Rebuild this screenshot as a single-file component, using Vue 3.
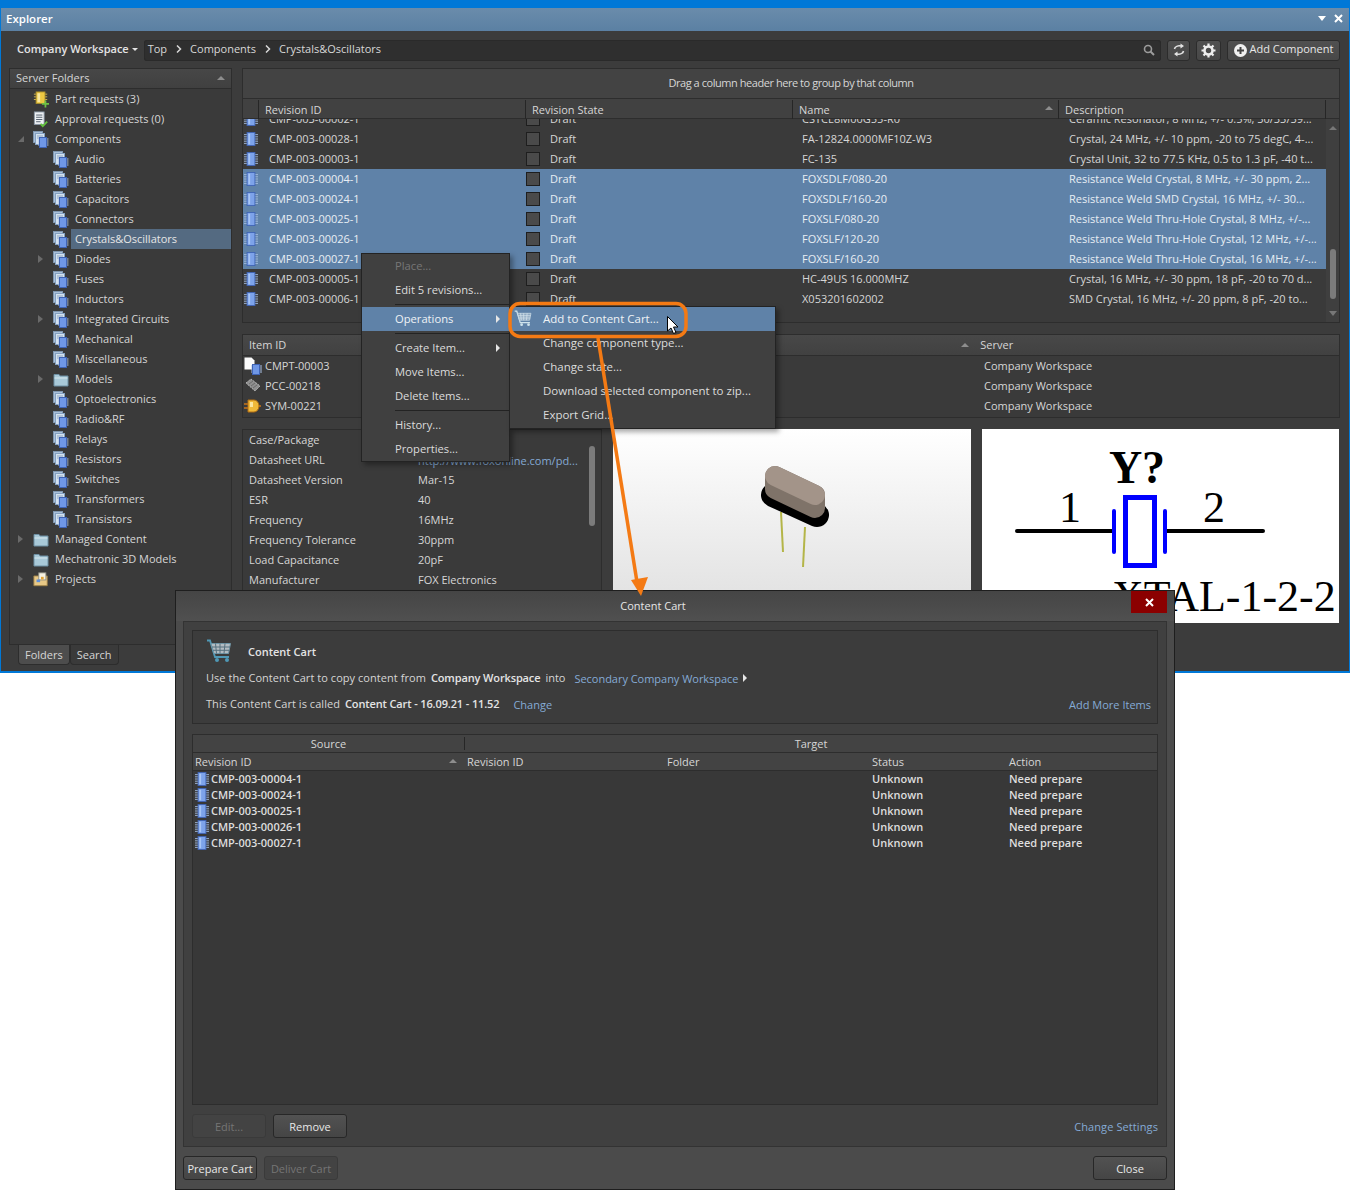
<script setup>
// folder tree on the left of the explorer
const tree = [
  { name: "Part requests (3)", icon: "partreq", level: 0 },
  { name: "Approval requests (0)", icon: "approval", level: 0 },
  { name: "Components", icon: "stack", level: 0, open: true },
  { name: "Audio", icon: "stack", level: 1 },
  { name: "Batteries", icon: "stack", level: 1 },
  { name: "Capacitors", icon: "stack", level: 1 },
  { name: "Connectors", icon: "stack", level: 1 },
  { name: "Crystals&Oscillators", icon: "stack", level: 1, selected: true },
  { name: "Diodes", icon: "stack", level: 1, closed: true },
  { name: "Fuses", icon: "stack", level: 1 },
  { name: "Inductors", icon: "stack", level: 1 },
  { name: "Integrated Circuits", icon: "stack", level: 1, closed: true },
  { name: "Mechanical", icon: "stack", level: 1 },
  { name: "Miscellaneous", icon: "stack", level: 1 },
  { name: "Models", icon: "folder", level: 1, closed: true },
  { name: "Optoelectronics", icon: "stack", level: 1 },
  { name: "Radio&RF", icon: "stack", level: 1 },
  { name: "Relays", icon: "stack", level: 1 },
  { name: "Resistors", icon: "stack", level: 1 },
  { name: "Switches", icon: "stack", level: 1 },
  { name: "Transformers", icon: "stack", level: 1 },
  { name: "Transistors", icon: "stack", level: 1 },
  { name: "Managed Content", icon: "folder", level: 0, closed: true },
  { name: "Mechatronic 3D Models", icon: "folder", level: 0 },
  { name: "Projects", icon: "projects", level: 0, closed: true },
];

// component grid rows
const revisions = [
  { id: "CMP-003-00002-1", name: "CSTCE8M00G55-R0", desc: "Ceramic Resonator, 8 MHz, +/- 0.5%, 30/33/39..." },
  { id: "CMP-003-00028-1", name: "FA-12824.0000MF10Z-W3", desc: "Crystal, 24 MHz, +/- 10 ppm, -20 to 75 degC, 4-..." },
  { id: "CMP-003-00003-1", name: "FC-135", desc: "Crystal Unit, 32 to 77.5 KHz, 0.5 to 1.3 pF, -40 t..." },
  { id: "CMP-003-00004-1", name: "FOXSDLF/080-20", desc: "Resistance Weld Crystal, 8 MHz, +/- 30 ppm, 2...", selected: true },
  { id: "CMP-003-00024-1", name: "FOXSDLF/160-20", desc: "Resistance Weld SMD Crystal, 16 MHz, +/- 30...", selected: true },
  { id: "CMP-003-00025-1", name: "FOXSLF/080-20", desc: "Resistance Weld Thru-Hole Crystal, 8 MHz, +/-...", selected: true },
  { id: "CMP-003-00026-1", name: "FOXSLF/120-20", desc: "Resistance Weld Thru-Hole Crystal, 12 MHz, +/-...", selected: true },
  { id: "CMP-003-00027-1", name: "FOXSLF/160-20", desc: "Resistance Weld Thru-Hole Crystal, 16 MHz, +/-...", selected: true },
  { id: "CMP-003-00005-1", name: "HC-49US 16.000MHZ", desc: "Crystal, 16 MHz, +/- 30 ppm, 18 pF, -20 to 70 d..." },
  { id: "CMP-003-00006-1", name: "X053201602002", desc: "SMD Crystal, 16 MHz, +/- 20 ppm, 8 pF, -20 to..." },
];

const items = [
  { id: "CMPT-00003", icon: "doc" },
  { id: "PCC-00218", icon: "pcb" },
  { id: "SYM-00221", icon: "sym" },
];

const params = [
  ["Case/Package", "HC-49US"],
  ["Datasheet URL", "http://www.foxonline.com/pd..."],
  ["Datasheet Version", "Mar-15"],
  ["ESR", "40"],
  ["Frequency", "16MHz"],
  ["Frequency Tolerance", "30ppm"],
  ["Load Capacitance", "20pF"],
  ["Manufacturer", "FOX Electronics"],
];

const cartRows = ["CMP-003-00004-1", "CMP-003-00024-1", "CMP-003-00025-1", "CMP-003-00026-1", "CMP-003-00027-1"];
</script>

<template>
  <div class="page">
    <!-- shared icon symbols -->
    <svg class="defs" width="0" height="0">
      <defs>
        <symbol id="chip" viewBox="0 0 16 16">
          <path d="M0 3h4M0 5.500h4M0 8h4M0 10.500h4M0 13h4M12 3h4M12 5.500h4M12 8h4M12 10.500h4M12 13h4" stroke="#a9c0e4" stroke-width="1" />
          <rect x="3.500" y="0.500" width="9" height="15" fill="#7da3ea" stroke="#3f63b4" />
          <rect x="5" y="2" width="2" height="12" fill="#a9c6f5" />
        </symbol>
        <symbol id="stack" viewBox="0 0 16 17">
          <rect x="0.500" y="0.500" width="9" height="11" fill="#a9bfd8" stroke="#7f95ad" />
          <rect x="2.500" y="2.500" width="9" height="11" fill="#d5e1ee" stroke="#84a0bf" />
          <path d="M4 5h6M4 7h6" stroke="#8fa6bd" />
          <path d="M5 8h2M5 10h2M5 12h2M5 14h2M13 8h2.500M13 10h2.500M13 12h2.500M13 14h2.500" stroke="#a9c0e4" />
          <rect x="6.500" y="6.500" width="7" height="10" fill="#6f97e6" stroke="#3f63b4" />
        </symbol>
        <symbol id="folder" viewBox="0 0 16 16">
          <path d="M1 3h5l1 1.500h8v10H1z" fill="#a9c9d8" stroke="#6d8fa3" />
          <path d="M1.500 6.500h13" stroke="#d7e8ef" />
        </symbol>
        <symbol id="partreq" viewBox="0 0 18 18">
          <path d="M1 3h3M1 6h3M1 9h3M13 3h3M13 6h3M13 9h3" stroke="#d9bd58" />
          <rect x="3.500" y="0.500" width="10" height="13" fill="#edc842" stroke="#a98f2b" />
          <rect x="5" y="2" width="3" height="10" fill="#f8e7a0" />
          <path d="M13 10h2v3h3v2h-3v3h-2v-3h-3v-2h3z" fill="#6fc144" />
        </symbol>
        <symbol id="approval" viewBox="0 0 18 18">
          <rect x="1.500" y="0.500" width="11" height="14" fill="#eef1f4" stroke="#8a97a5" />
          <path d="M3.500 4h7M3.500 6.500h7M3.500 9h7M3.500 11.500h5" stroke="#475462" />
          <path d="M8.500 14l2.500 2.500 5-5" fill="none" stroke="#63c23c" stroke-width="2" />
        </symbol>
        <symbol id="projects" viewBox="0 0 18 18">
          <path d="M1 5h6v-1h4v1h5v11H1z" fill="#e7c886" stroke="#9d7f45" />
          <rect x="6.500" y="1.500" width="8" height="8" fill="#f6f2e2" stroke="#8c8c80" />
          <path d="M4 9h4v3H4z" fill="#5f8fd8" />
          <path d="M9 6h3v3H9z" fill="#e4a535" />
        </symbol>
        <symbol id="doc" viewBox="0 0 18 18">
          <path d="M0.500 0.500h7l3 3v9h-10z" fill="#fbfbfb" />
          <path d="M7 9h1M7 11h1M7 13h1M7 15h1M16 9h2M16 11h2M16 13h2M16 15h2" stroke="#a9c0e4" />
          <rect x="8.500" y="7.500" width="7" height="10" fill="#6f97e6" stroke="#3f63b4" />
        </symbol>
        <symbol id="pcb" viewBox="0 0 18 18">
          <path d="M2 6l5-4 9 7-5 5z" fill="#8f8f8f" stroke="#b5b5b5" stroke-dasharray="2 1" />
          <path d="M5 7l4-3M7 9l4-3M9 11l4-3" stroke="#6a6a6a" />
        </symbol>
        <symbol id="sym" viewBox="0 0 18 18">
          <path d="M0 7h5M0 11h5M13 9h4" stroke="#c8741a" stroke-width="1.500" />
          <path d="M4 3h6a5 6 0 0 1 0 12H4z" fill="#f0b93a" stroke="#b06d12" />
          <path d="M6 5h3v5H6z" fill="#fbe6a2" />
        </symbol>
        <symbol id="cart" viewBox="0 0 26 24">
          <path d="M1 1.500h3l5 16.500h14" fill="none" stroke="#4f98b5" stroke-width="1.800" />
          <path d="M5 4.500h19.500l-2 10H8z" fill="#b3bcc2" stroke="#6f95a6" />
          <path d="M9.500 4.500l1 10M14 4.500v10M19 4.500l-1 10M6 8h18M7 11.300h16.500" stroke="#56707e" />
          <circle cx="11" cy="21" r="2" fill="#4f98b5" />
          <circle cx="21" cy="21" r="2" fill="#4f98b5" />
        </symbol>
        <!-- paler cart for the highlighted menu row -->
        <symbol id="cart-hot" viewBox="0 0 26 24">
          <path d="M1 1.500h3l5 16.500h14" fill="none" stroke="#cfe3ec" stroke-width="1.800" />
          <path d="M5 4.500h19.500l-2 10H8z" fill="#8fa9c2" stroke="#cfdfe8" />
          <path d="M9.500 4.500l1 10M14 4.500v10M19 4.500l-1 10M6 8h18M7 11.300h16.500" stroke="#dbe6ee" />
          <circle cx="11" cy="21" r="2" fill="#cfe3ec" />
          <circle cx="21" cy="21" r="2" fill="#cfe3ec" />
        </symbol>
      </defs>
    </svg>

    <div class="window">
      <div class="titlebar">
        <span class="title-text">Explorer</span>
        <div class="title-btns">
          <span class="tri-down"></span>
          <svg width="9" height="9" viewBox="0 0 9 9"><path d="M1 1l7 7M8 1l-7 7" stroke="#fff" stroke-width="2" /></svg>
        </div>
      </div>

      <!-- workspace picker, breadcrumb, actions -->
      <div class="toolbar">
        <span class="workspace">Company Workspace</span>
        <span class="caret"></span>
        <div class="searchbar">
          <span>Top</span>
          <svg class="crumb" width="6" height="8" viewBox="0 0 6 8"><path d="M1 0.500L4.500 4 1 7.500" fill="none" stroke="#d8d8d8" stroke-width="1.500" /></svg>
          <span>Components</span>
          <svg class="crumb" width="6" height="8" viewBox="0 0 6 8"><path d="M1 0.500L4.500 4 1 7.500" fill="none" stroke="#d8d8d8" stroke-width="1.500" /></svg>
          <span>Crystals&amp;Oscillators</span>
          <svg class="search-icon" width="12" height="12" viewBox="0 0 12 12">
            <circle cx="5" cy="5" r="3.500" fill="none" stroke="#9c9c9c" stroke-width="1.600" />
            <path d="M7.500 7.500L11 11" stroke="#9c9c9c" stroke-width="2" />
          </svg>
        </div>
        <button class="tool-btn refresh">
          <svg width="14" height="14" viewBox="0 0 14 14">
            <path d="M2.500 6C3 3.500 6 2.500 9 3M11.500 8C11 10.500 8 11.500 5 11" fill="none" stroke="#e4e4e4" stroke-width="1.600" />
            <path d="M8.500 0.500l3.500 2.500-3.500 2.500zM5.500 13.500L2 11l3.500-2.500z" fill="#e4e4e4" />
          </svg>
        </button>
        <button class="tool-btn gear">
          <svg width="15" height="15" viewBox="0 0 15 15">
            <circle cx="7.500" cy="7.500" r="4" fill="none" stroke="#eee" stroke-width="2.600" />
            <path d="M7.500 0.500v3M7.500 11.500v3M0.500 7.500h3M11.500 7.500h3M2.500 2.500l2 2M10.500 10.500l2 2M12.500 2.500l-2 2M4.500 10.500l-2 2" stroke="#eee" stroke-width="2.200" />
          </svg>
        </button>
        <button class="tool-btn add">
          <svg width="13" height="13" viewBox="0 0 13 13">
            <circle cx="6.500" cy="6.500" r="6.500" fill="#f0f0f0" />
            <path d="M6.500 3v7M3 6.500h7" stroke="#444" stroke-width="2" />
          </svg>
          <span class="add-label">Add Component</span>
        </button>
      </div>

      <div class="main">
        <!-- server folders panel -->
        <div class="left">
          <div class="panel folders">
            <div class="col-head folders-head">
              <span>Server Folders</span>
              <span class="tri-up"></span>
            </div>
            <div v-for="node in tree" :key="node.name" class="tree-row" :class="'lvl' + node.level">
              <span class="expander">
                <span v-if="node.open" class="tri-open"></span>
                <span v-else-if="node.closed" class="tri-closed"></span>
              </span>
              <svg class="tree-icon" width="16" height="17"><use :href="'#' + node.icon" /></svg>
              <span class="tree-label" :class="{ 'tree-selected': node.selected }">{{ node.name }}</span>
            </div>
          </div>
          <div class="tabs">
            <span class="tab active">Folders</span>
            <span class="tab">Search</span>
          </div>
        </div>

        <div class="right">
          <!-- revisions grid -->
          <div class="panel grid-panel">
            <div class="group-bar">Drag a column header here to group by that column</div>
            <div class="grid-head">
              <span class="col-title first">Revision ID</span>
              <span class="col-title">Revision State</span>
              <span class="col-title">Name<span class="tri-up sort"></span></span>
              <span class="col-title last">Description</span>
            </div>
            <div class="grid-body">
              <div class="grid-rows">
                <div v-for="row in revisions" :key="row.id" class="grid-row" :class="{ selected: row.selected }">
                  <span class="cell id-cell">
                    <svg width="14" height="14"><use href="#chip" /></svg>
                    {{ row.id }}
                  </span>
                  <span class="cell state-cell"><span class="state-box"></span>Draft</span>
                  <span class="cell name-cell">{{ row.name }}</span>
                  <span class="cell desc-cell">{{ row.desc }}</span>
                </div>
              </div>
              <div class="scrollbar">
                <span class="tri-up"></span>
                <span class="thumb"></span>
                <span class="tri-down dim"></span>
              </div>
            </div>
          </div>

          <!-- items of the selected revision -->
          <div class="panel items-panel">
            <div class="items-head">
              <span>Item ID</span>
              <span class="items-server"><span class="tri-up sort2"></span>Server</span>
            </div>
            <div v-for="item in items" :key="item.id" class="item-row">
              <span class="item-id">
                <svg width="18" height="18"><use :href="'#' + item.icon" /></svg>
                {{ item.id }}
              </span>
              <span class="item-server">Company Workspace</span>
            </div>
          </div>

          <div class="lower">
            <!-- parameters list -->
            <div class="panel params">
              <div v-for="p in params" :key="p[0]" class="param-row">
                <span class="param-name">{{ p[0] }}</span>
                <span class="param-value" :class="{ link: p[0] === 'Datasheet URL' }">{{ p[1] }}</span>
              </div>
              <span class="params-thumb"></span>
            </div>

            <!-- 3d preview of the part -->
            <div class="preview">
              <svg width="358" height="194" viewBox="0 0 358 194">
                <path d="M168 83L170 123" stroke="#b4b548" stroke-width="2" />
                <path d="M192 98L190 138" stroke="#b4b548" stroke-width="2" />
                <path d="M160 66L204 86" stroke="#000" stroke-width="24" stroke-linecap="round" />
                <path d="M162 47L202 66V79L162 60z" fill="#7f7369" stroke="#7f7369" stroke-width="20" stroke-linejoin="round" />
                <path d="M162 47L202 66" stroke="#a39489" stroke-width="20" stroke-linecap="round" />
              </svg>
            </div>

            <!-- schematic symbol -->
            <div class="symbol">
              <svg width="357" height="194" viewBox="0 0 357 194">
                <text class="sym-ref" x="155" y="54" text-anchor="middle">Y?</text>
                <text class="sym-pin" x="88" y="93" text-anchor="middle">1</text>
                <text class="sym-pin" x="232" y="93" text-anchor="middle">2</text>
                <path d="M35 102H132M185 102H281" stroke="#000" stroke-width="4" stroke-linecap="round" />
                <path d="M132 82V123M183 82V123" stroke="#0000ff" stroke-width="4" stroke-linecap="round" />
                <rect x="143.500" y="68.500" width="29" height="68" fill="none" stroke="#0000ff" stroke-width="5" />
                <text class="sym-pin" x="130" y="182">XTAL-1-2-2</text>
              </svg>
            </div>
          </div>
        </div>
      </div>
    </div>

    <!-- right click menu -->
    <div class="menu context">
      <div class="menu-item disabled">Place...</div>
      <div class="menu-item">Edit 5 revisions...</div>
      <div class="menu-sep"></div>
      <div class="menu-item hot">Operations<span class="tri-right"></span></div>
      <div class="menu-sep"></div>
      <div class="menu-item">Create Item...<span class="tri-right"></span></div>
      <div class="menu-item">Move Items...</div>
      <div class="menu-item">Delete Items...</div>
      <div class="menu-sep"></div>
      <div class="menu-item">History...</div>
      <div class="menu-item">Properties...</div>
    </div>

    <div class="menu submenu">
      <div class="menu-item hot">
        <svg class="menu-icon" width="18" height="17"><use href="#cart-hot" /></svg>
        Add to Content Cart...
      </div>
      <div class="menu-item">Change component type...</div>
      <div class="menu-item">Change state...</div>
      <div class="menu-item">Download selected component to zip...</div>
      <div class="menu-item">Export Grid...</div>
    </div>

    <!-- content cart dialog -->
    <div class="dialog">
      <div class="dialog-title">
        Content Cart
        <span class="dialog-close">
          <svg width="9" height="9" viewBox="0 0 9 9"><path d="M1 1l7 7M8 1l-7 7" stroke="#fff" stroke-width="2" /></svg>
        </span>
      </div>
      <div class="dialog-frame">
        <div class="info-box">
          <div class="info-head">
            <svg width="26" height="24"><use href="#cart" /></svg>
            <b>Content Cart</b>
          </div>
          <div class="info-line first-line">
            <span class="wide">Use the Content Cart to copy content from</span>
            <b class="gap tight">Company Workspace</b>
            <span class="gap">into</span>
            <a class="link target">Secondary Company Workspace</a>
            <span class="tri-right small"></span>
          </div>
          <div class="info-line second-line">
            <span class="wide">This Content Cart is called</span>
            <b class="gap tight">Content Cart - 16.09.21 - 11.52</b>
            <a class="link change">Change</a>
            <a class="link more">Add More Items</a>
          </div>
        </div>

        <div class="cart-table">
          <div class="cart-group">
            <span class="group-source">Source</span>
            <span class="group-target">Target</span>
          </div>
          <div class="cart-head">
            <span>Revision ID<span class="tri-up sort3"></span></span>
            <span>Revision ID</span>
            <span>Folder</span>
            <span>Status</span>
            <span>Action</span>
          </div>
          <div class="cart-body">
            <div v-for="id in cartRows" :key="id" class="cart-row">
              <span class="cart-id">
                <svg width="14" height="14"><use href="#chip" /></svg>
                {{ id }}
              </span>
              <span></span>
              <span></span>
              <span>Unknown</span>
              <span>Need prepare</span>
            </div>
          </div>
        </div>

        <div class="frame-actions">
          <button class="btn off">Edit...</button>
          <button class="btn">Remove</button>
          <a class="link settings">Change Settings</a>
        </div>
      </div>
      <div class="dialog-actions">
        <button class="btn">Prepare Cart</button>
        <button class="btn off">Deliver Cart</button>
        <button class="btn close-btn">Close</button>
      </div>
    </div>

    <!-- orange callout, goes over everything -->
    <svg class="callout" width="1350" height="1190" viewBox="0 0 1350 1190">
      <path d="M598 338L637 582" stroke="#f47a14" stroke-width="3.500" fill="none" />
      <path d="M631 580L648 577L641 596z" fill="#f47a14" />
      <rect x="510" y="303.500" width="176" height="33" rx="10" fill="none" stroke="#f47a14" stroke-width="3.500" />
      <path d="M667.500 316.500V331L671 328L673.500 333.500L676 332.500L673.500 327L678 327z" fill="#fff" stroke="#000" stroke-width="1" />
    </svg>
  </div>
</template>

<style>
body {
  margin: 0;
  background: #fff;
}
</style>

<style scoped>
.page {
  position: relative;
  width: 1350px;
  height: 1190px;
  overflow: hidden;
  font-family: "Open Sans", "Noto Sans", sans-serif;
  font-size: 11px;
  color: #d6d6d6;
  background: #fff;
}

.defs {
  position: absolute;
}

button {
  font-family: inherit;
  font-size: 11px;
  color: #e8e8e8;
  padding: 0;
}

/* small triangles used all over */
.tri-up,
.tri-down,
.tri-right,
.tri-closed,
.tri-open {
  display: inline-block;
  width: 0;
  height: 0;
}
.tri-up {
  border-left: 4px solid transparent;
  border-right: 4px solid transparent;
  border-bottom: 4px solid #8d8d8d;
}
.tri-down {
  border-left: 4px solid transparent;
  border-right: 4px solid transparent;
  border-top: 5px solid #fff;
}
.tri-down.dim {
  border-top-color: #777;
}
.tri-right {
  position: absolute;
  right: 9px;
  top: 8px;
  border-top: 4px solid transparent;
  border-bottom: 4px solid transparent;
  border-left: 4px solid #e6e6e6;
}
.tri-closed {
  border-top: 4px solid transparent;
  border-bottom: 4px solid transparent;
  border-left: 5px solid #6a6a6a;
}
.tri-open {
  border-left: 6px solid transparent;
  border-bottom: 6px solid #6a6a6a;
}

/* main window */
.window {
  box-sizing: border-box;
  height: 673px;
  background: #3c3c3c;
  border: 1px solid #0078d7;
  border-top: 8px solid #0078d7;
  border-bottom-width: 2px;
}

.titlebar {
  box-sizing: border-box;
  display: flex;
  align-items: center;
  justify-content: space-between;
  height: 23px;
  padding: 0 6px 2px 5px;
  background: linear-gradient(#6a8cab, #5b80a3);
}
.title-text {
  font-size: 11.500px;
  font-weight: 600;
  color: #fff;
}
.title-btns {
  display: flex;
  align-items: center;
  gap: 8px;
}

.toolbar {
  display: flex;
  align-items: center;
  height: 32px;
  padding: 3px 9px 0 16px;
}
.workspace {
  padding-bottom: 4px;
  font-weight: 600;
  color: #e4e4e4;
}
.caret {
  margin: 0 6px 2px 3px;
  border-left: 3px solid transparent;
  border-right: 3px solid transparent;
  border-top: 3px solid #e4e4e4;
}
.searchbar {
  flex: 1;
  display: flex;
  align-items: center;
  box-sizing: border-box;
  height: 21px;
  padding: 0 6px 3px 4px;
  background: #2f2f2f;
  border-radius: 3px;
  box-shadow: inset 0 0 0 1px #2a2a2a;
  color: #d8d8d8;
}
.crumb {
  margin: 0 8.500px;
}
.search-icon {
  margin: 3px 0 0 auto;
}
.tool-btn {
  display: flex;
  align-items: center;
  justify-content: center;
  height: 21px;
  margin-left: 6px;
  background: linear-gradient(#505050, #484848);
  border: 1px solid #2c2c2c;
  border-radius: 3px;
}
.refresh {
  width: 23px;
}
.gear {
  width: 25px;
}
.add {
  gap: 3px;
  width: 113px;
}
.add-label {
  padding-bottom: 3px;
}

.main {
  display: flex;
  gap: 10px;
  margin: 2px 9px 0 8px;
}
.panel {
  box-sizing: border-box;
  background: #3a3a3a;
  border: 1px solid #2d2d2d;
}

/* left folders panel */
.left {
  width: 223px;
  flex-shrink: 0;
}
.folders {
  height: 577px;
}
.col-head {
  background: linear-gradient(#474747, #404040);
  border-bottom: 1px solid #2d2d2d;
}
.folders-head {
  display: flex;
  align-items: center;
  justify-content: space-between;
  box-sizing: border-box;
  height: 20px;
  padding: 0 6px 2px;
}
.tree-row {
  display: flex;
  align-items: center;
  height: 20px;
}
.expander {
  display: flex;
  align-items: center;
  justify-content: center;
  width: 7px;
  margin-right: 9px;
}
.lvl0 .expander {
  margin-left: 7px;
}
.lvl1 .expander {
  margin-left: 27px;
}
.tree-icon {
  flex-shrink: 0;
  margin-right: 2px;
}
.tree-label {
  flex: 1;
  height: 20px;
  line-height: 20px;
  padding-left: 4px;
}
.tree-selected {
  background: #546a81;
  color: #e6e6e6;
}
.tabs {
  display: flex;
  margin-left: 9px;
}
.tab {
  display: block;
  box-sizing: border-box;
  height: 20px;
  line-height: 19px;
  padding: 0 6px;
  background: #3a3a3a;
  border: 1px solid #2d2d2d;
  border-top: none;
  border-radius: 0 0 4px 4px;
}
.tab.active {
  background: #4d4d4d;
}

/* right column */
.right {
  flex: 1;
  display: flex;
  flex-direction: column;
  gap: 11px;
}
.grid-panel {
  height: 255px;
  overflow: hidden;
}
.group-bar {
  height: 29px;
  line-height: 28px;
  text-align: center;
  letter-spacing: -0.450px;
  background: #434343;
  border-bottom: 1px solid #2d2d2d;
}
.grid-head {
  display: grid;
  grid-template-columns: 282px 267px 266px 268px;
  height: 19px;
  background: #414141;
  border-bottom: 1px solid #2d2d2d;
}
.col-title {
  position: relative;
  padding-left: 6px;
  border-left: 1px solid #262626;
  margin: 1px 0;
  line-height: 19px;
}
.col-title.first {
  margin-left: 15px;
  padding-left: 6px;
}
.col-title.last {
  border-right: 1px solid #262626;
}
.sort {
  position: absolute;
  right: 5px;
  top: 6px;
}
.grid-body {
  display: flex;
  height: 206px;
  overflow: hidden;
}
.grid-rows {
  width: 1083px;
  margin-top: -10px;
}
.grid-row {
  display: grid;
  grid-template-columns: 282px 267px 266px 268px;
  height: 20px;
  line-height: 20px;
}
.grid-row.selected {
  background: #5f82a8;
  color: #e8eef4;
}
.cell {
  overflow: hidden;
  white-space: nowrap;
}
.id-cell {
  display: flex;
  align-items: center;
  gap: 11px;
  padding-left: 1px;
}
.state-cell {
  display: flex;
  align-items: center;
  padding-left: 1px;
}
.state-box {
  box-sizing: border-box;
  width: 14px;
  height: 14px;
  margin: 0 10px 0 0;
  background: #4a4a4a;
  border: 1px solid #1e1e1e;
}
.name-cell {
  padding-left: 10px;
}
.desc-cell {
  padding-left: 11px;
}
.scrollbar {
  position: relative;
  flex: 1;
  background: #3f3f3f;
}
.scrollbar .tri-up {
  position: absolute;
  left: 3px;
  top: 7px;
  border-bottom-color: #777;
}
.scrollbar .thumb {
  position: absolute;
  left: 4px;
  top: 130px;
  width: 6px;
  height: 50px;
  background: #7b7b7b;
  border-radius: 3px;
}
.scrollbar .tri-down {
  position: absolute;
  left: 3px;
  top: 192px;
}

/* item list */
.items-panel {
  height: 84px;
}
.items-head {
  display: flex;
  height: 20px;
  line-height: 20px;
  padding-left: 6px;
  background: linear-gradient(#484848, #414141);
  border-bottom: 1px solid #2d2d2d;
}
.items-server {
  position: relative;
  margin-left: 694px;
}
.sort2 {
  position: absolute;
  left: -19px;
  top: 8px;
}
.item-row {
  display: flex;
  height: 20px;
  line-height: 20px;
}
.item-id {
  display: flex;
  align-items: center;
  gap: 3px;
  width: 740px;
  padding-left: 1px;
}

/* bottom row */
.lower {
  display: flex;
  height: 194px;
  gap: 11px;
}
.params {
  position: relative;
  width: 360px;
}
.param-row {
  display: flex;
  height: 20px;
  line-height: 20px;
  padding-left: 6px;
}
.param-name {
  width: 169px;
}
.param-value.link {
  color: #84a9d4;
}
.params-thumb {
  position: absolute;
  right: 6px;
  top: 16px;
  width: 6px;
  height: 80px;
  background: #7b7b7b;
  border-radius: 3px;
}
.preview {
  width: 358px;
  height: 194px;
  background: linear-gradient(#fff, #dedede);
}
.symbol {
  width: 357px;
  height: 194px;
  background: #fff;
}
.sym-ref {
  font: bold 46px "Liberation Serif", serif;
}
.sym-pin {
  font: 44px "Liberation Serif", serif;
}

/* context menus */
.menu {
  position: absolute;
  box-sizing: border-box;
  background: #404040;
  border: 1px solid #232323;
  box-shadow: 3px 3px 5px rgba(0, 0, 0, 0.35);
}
.menu-item {
  position: relative;
  height: 24px;
  line-height: 24px;
  padding-left: 33px;
  color: #dcdcdc;
}
.menu-item.disabled {
  color: #777;
}
.menu-item.hot {
  background: #5f82a8;
  color: #eef2f6;
}
.menu-sep {
  height: 1px;
  margin: 2px 0 2px 33px;
  background: #232323;
}
.context {
  left: 361px;
  top: 253px;
  width: 149px;
  height: 209px;
  font-size: 11.200px;
}
.submenu {
  left: 509px;
  top: 306px;
  width: 267px;
  height: 123px;
  font-size: 11.500px;
}
.menu-icon {
  position: absolute;
  left: 4px;
  top: 3px;
}

/* content cart dialog */
.dialog {
  position: absolute;
  left: 175px;
  top: 590px;
  box-sizing: border-box;
  width: 1000px;
  height: 600px;
  background: #4b4b4b;
  border: 1px solid #1e1e1e;
}
.dialog-title {
  position: relative;
  height: 30px;
  line-height: 30px;
  padding-right: 44px;
  text-align: center;
  color: #e6e6e6;
  background: linear-gradient(#454545, #505050);
}
.dialog-close {
  position: absolute;
  right: 7px;
  top: 0;
  display: flex;
  align-items: center;
  justify-content: center;
  width: 36px;
  height: 22px;
  background: #8b0000;
}
.dialog-frame {
  box-sizing: border-box;
  height: 526px;
  margin: 0 7px;
  padding: 8px;
  background: #404040;
  border: 1px solid #333;
}
.info-box {
  position: relative;
  box-sizing: border-box;
  height: 94px;
  padding: 7px 13px;
  background: #3c3c3c;
  border: 1px solid #2d2d2d;
}
.info-head {
  display: flex;
  align-items: center;
  gap: 16px;
  height: 26px;
  color: #e6e6e6;
}
b {
  font-weight: 600;
  color: #e4e4e4;
}
.info-line {
  position: relative;
  display: flex;
  height: 26px;
  line-height: 26px;
  white-space: nowrap;
}
.info-line.first-line {
  margin-top: 1px;
}
.wide {
  letter-spacing: 0.050px;
}
.gap {
  margin-left: 5px;
}
.tight {
  letter-spacing: -0.130px;
}
.link {
  color: #85abd6;
  padding-top: 1px;
}
.target {
  margin-left: 9px;
  letter-spacing: -0.030px;
}
.tri-right.small {
  position: static;
  margin: 9px 0 0 5px;
}
.change {
  margin-left: 14px;
}
.more {
  position: absolute;
  right: -7px;
}
.cart-table {
  box-sizing: border-box;
  height: 371px;
  margin-top: 10px;
  background: #383838;
  border: 1px solid #2d2d2d;
}
.cart-group {
  display: flex;
  height: 17px;
  background: #434343;
  border-bottom: 1px solid #2d2d2d;
}
.group-source {
  width: 271px;
  text-align: center;
  border-right: 1px solid #262626;
  margin: 2px 0;
  line-height: 14px;
}
.group-target {
  flex: 1;
  text-align: center;
  margin: 2px 0;
  line-height: 14px;
}
.cart-head,
.cart-row {
  display: grid;
  grid-template-columns: 272px 200px 205px 137px 1fr;
}
.cart-head {
  height: 17px;
  line-height: 17px;
  background: #434343;
  border-bottom: 1px solid #2d2d2d;
  padding-left: 2px;
}
.cart-head > span {
  position: relative;
}
.sort3 {
  position: absolute;
  right: 10px;
  top: 6px;
}
.cart-row {
  height: 16px;
  line-height: 16px;
  padding-left: 2px;
  font-weight: 600;
  color: #dedede;
}
.cart-id {
  display: flex;
  align-items: center;
  gap: 2px;
}

.frame-actions {
  display: flex;
  align-items: center;
  gap: 7px;
  height: 24px;
  margin-top: 9px;
}
.btn {
  box-sizing: border-box;
  width: 74px;
  height: 24px;
  background: linear-gradient(#525252, #454545);
  border: 1px solid #272727;
  border-radius: 3px;
}
.btn.off {
  color: #757575;
  background: #434343;
  border-color: #3a3a3a;
}
.settings {
  margin-left: auto;
  letter-spacing: 0.100px;
}
.dialog-actions {
  display: flex;
  gap: 7px;
  margin: 9px 7px 0;
}
.close-btn {
  margin-left: auto;
}

/* annotation layer */
.callout {
  position: absolute;
  left: 0;
  top: 0;
  pointer-events: none;
}
</style>
